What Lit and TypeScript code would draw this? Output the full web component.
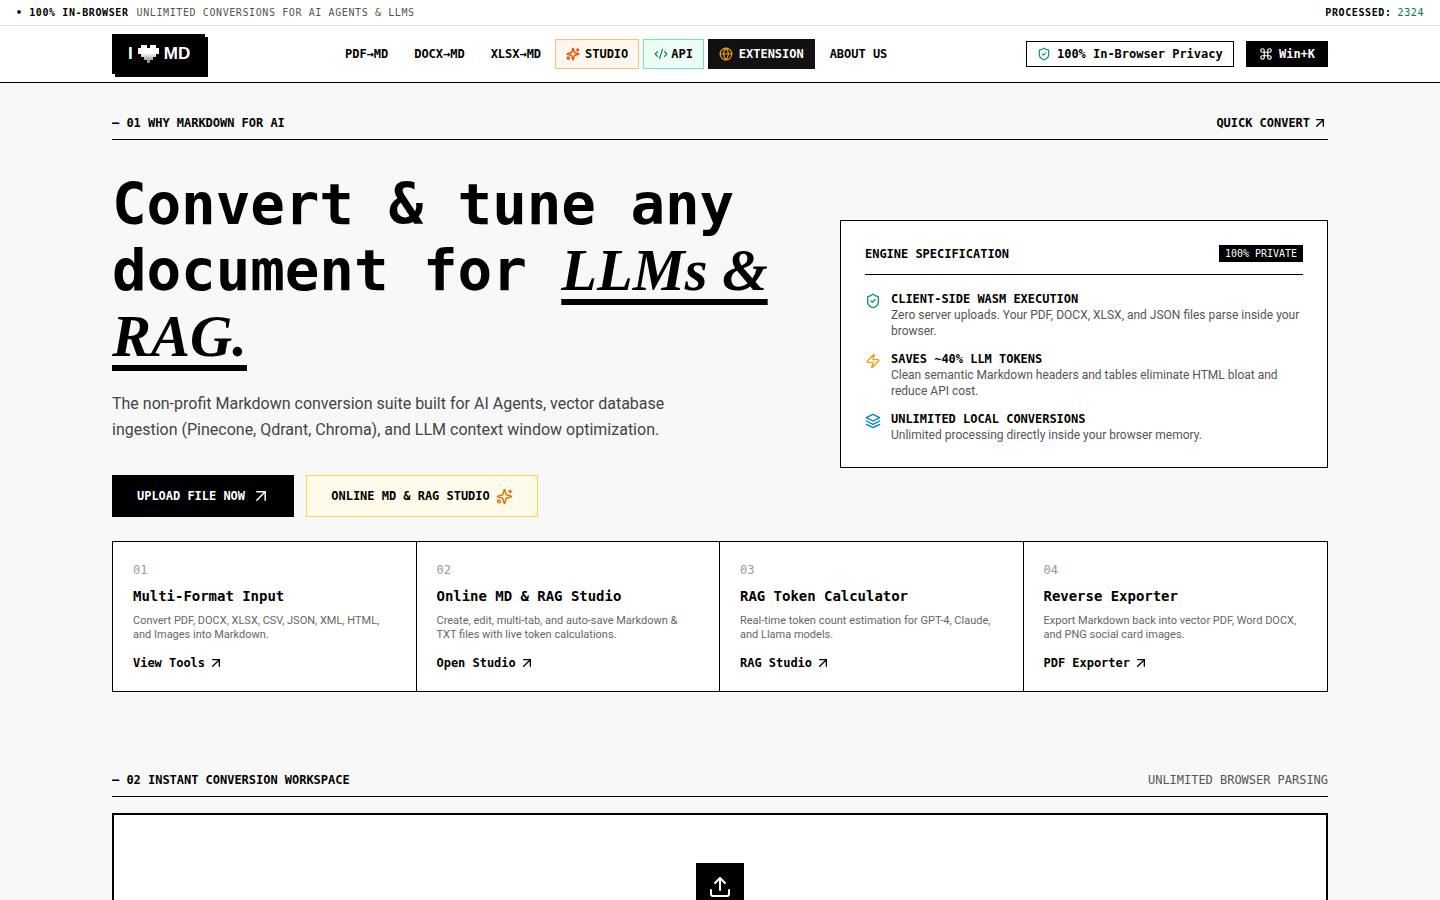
import { LitElement, html, css, svg } from 'lit';
import { customElement } from 'lit/decorators.js';

const icons: Record<string, unknown> = {
  arrow: svg`<path d="M7 7h10v10" /><path d="M7 17 17 7" />`,
  shield: svg`<path d="M20 13c0 5-3.5 7.5-7.66 8.95a1 1 0 0 1-.67-.01C7.5 20.5 4 18 4 13V6a1 1 0 0 1 1-1c2 0 4.5-1.2 6.24-2.72a1.17 1.17 0 0 1 1.52 0C14.51 3.81 17 5 19 5a1 1 0 0 1 1 1z" /><path d="m9 12 2 2 4-4" />`,
  zap: svg`<path d="M4 14a1 1 0 0 1-.78-1.63l9.9-10.2a.5.5 0 0 1 .86.46l-1.92 6.02A1 1 0 0 0 13 10h7a1 1 0 0 1 .78 1.63l-9.9 10.2a.5.5 0 0 1-.86-.46l1.92-6.02A1 1 0 0 0 11 14z" />`,
  layers: svg`<path d="M12 2 2 7l10 5 10-5-10-5z" /><path d="m2 17 10 5 10-5" /><path d="m2 12 10 5 10-5" />`,
  sparkles: svg`<path d="M9.937 15.5A2 2 0 0 0 8.5 14.063l-6.135-1.582a.5.5 0 0 1 0-.962L8.5 9.936A2 2 0 0 0 9.937 8.5l1.582-6.135a.5.5 0 0 1 .963 0L14.063 8.5A2 2 0 0 0 15.5 9.937l6.135 1.581a.5.5 0 0 1 0 .964L15.5 14.063a2 2 0 0 0-1.437 1.437l-1.582 6.135a.5.5 0 0 1-.963 0z" /><path d="M20 3v4" /><path d="M22 5h-4" /><circle cx="4" cy="19" r="2" />`,
  command: svg`<path d="M15 6v12a3 3 0 1 0 3-3H6a3 3 0 1 0 3 3V6a3 3 0 1 0-3 3h12a3 3 0 1 0-3-3" />`,
  globe: svg`<circle cx="12" cy="12" r="10" /><path d="M12 2a14.5 14.5 0 0 0 0 20 14.5 14.5 0 0 0 0-20" /><path d="M2 12h20" />`,
  code: svg`<path d="m18 16 4-4-4-4" /><path d="m6 8-4 4 4 4" /><path d="m14.5 4-5 16" />`,
  upload: svg`<path d="M12 3v12" /><path d="m17 8-5-5-5 5" /><path d="M21 15v4a2 2 0 0 1-2 2H5a2 2 0 0 1-2-2v-4" />`,
};

const icon = (name: string, size: number, color = 'currentColor', width = 2) => html`
  <svg class="ico" width=${size} height=${size} viewBox="0 0 24 24" fill="none" stroke=${color}
    stroke-width=${width} stroke-linecap="round" stroke-linejoin="round">${icons[name]}</svg>
`;

const specs = [
  {
    icon: 'shield',
    color: '#059669',
    title: 'CLIENT-SIDE WASM EXECUTION',
    text: 'Zero server uploads. Your PDF, DOCX, XLSX, and JSON files parse inside your browser.',
  },
  {
    icon: 'zap',
    color: '#f59e0b',
    title: 'SAVES ~40% LLM TOKENS',
    text: 'Clean semantic Markdown headers and tables eliminate HTML bloat and reduce API cost.',
  },
  {
    icon: 'layers',
    color: '#0284c7',
    title: 'UNLIMITED LOCAL CONVERSIONS',
    text: 'Unlimited processing directly inside your browser memory.',
  },
];

const features = [
  {
    num: '01',
    title: 'Multi-Format Input',
    text: 'Convert PDF, DOCX, XLSX, CSV, JSON, XML, HTML, and Images into Markdown.',
    link: 'View Tools',
  },
  {
    num: '02',
    title: 'Online MD & RAG Studio',
    text: 'Create, edit, multi-tab, and auto-save Markdown & TXT files with live token calculations.',
    link: 'Open Studio',
  },
  {
    num: '03',
    title: 'RAG Token Calculator',
    text: 'Real-time token count estimation for GPT-4, Claude, and Llama models.',
    link: 'RAG Studio',
  },
  {
    num: '04',
    title: 'Reverse Exporter',
    text: 'Export Markdown back into vector PDF, Word DOCX, and PNG social card images.',
    link: 'PDF Exporter',
  },
];

// pixel heart for the logo, one string per row
const heartRows = ['0110110', '1111111', '1111111', '0111110', '0011100', '0001000'];

@customElement('app-root')
export class AppRoot extends LitElement {
  static styles = css`
    :host {
      display: block;
      min-height: 900px;
      background: #f8f8f8;
      color: #000;
      font-family: 'DejaVu Sans Mono', monospace;
    }

    a {
      color: inherit;
      text-decoration: none;
    }

    .ico {
      display: block;
      flex: none;
    }

    /* DejaVu Mono runs a hair wider than 0.6em, pull it back */
    .links,
    .privacy,
    .kbd,
    .section-head,
    h1,
    .btn,
    .card-head,
    .spec h3,
    .feature h3,
    .feature a,
    .num {
      letter-spacing: -0.002em;
    }

    .topbar {
      display: flex;
      justify-content: space-between;
      align-items: center;
      height: 25px;
      padding: 0 16px;
      background: #fff;
      border-bottom: 1px solid #e5e5e5;
      font-size: 10px;
      letter-spacing: 0.06em;
      color: #555;
    }

    .topbar b {
      color: #000;
      margin-right: 8px;
    }

    .topbar .stat b {
      margin-right: 6px;
    }

    .topbar .count {
      color: #047857;
    }

    .nav {
      display: flex;
      align-items: center;
      height: 56px;
      padding: 0 112px;
      background: #fff;
      border-bottom: 1px solid #000;
    }

    .logo {
      display: flex;
      align-items: center;
      gap: 5px;
      width: 93px;
      height: 40px;
      padding-left: 16px;
      box-sizing: border-box;
      background: #000;
      box-shadow: 3px 3px 0 #000;
      color: #fff;
      font: 700 17px 'Liberation Sans', sans-serif;
    }

    .heart {
      display: grid;
      grid-template-columns: repeat(7, 3px);
      grid-auto-rows: 3px;
      background: linear-gradient(#fff 45%, #777);
    }

    .heart i {
      background: #000;
    }

    .heart i.on {
      background: transparent;
    }

    .links {
      display: flex;
      align-items: center;
      margin-left: 140px;
      font-size: 12px;
      font-weight: 700;
      flex: 1;
    }

    .links a.plain {
      margin-right: 26px;
    }

    .pill {
      display: flex;
      align-items: center;
      gap: 5px;
      height: 30px;
      box-sizing: border-box;
      padding: 0 10px;
      margin-right: 4px;
      border: 1px solid transparent;
    }

    .pill.studio {
      margin-left: -12px;
      background: #fff7ed;
      border-color: #fdba74;
    }

    .pill.api {
      gap: 3px;
      background: #ecfdf5;
      border-color: #6ee7b7;
    }

    .pill.ext {
      gap: 6px;
      background: #111;
      color: #fff;
      margin-right: 15px;
    }

    .privacy {
      display: flex;
      align-items: center;
      gap: 6px;
      height: 26px;
      width: 208px;
      box-sizing: border-box;
      padding-left: 10px;
      border: 1px solid #000;
      font-size: 12px;
      font-weight: 700;
    }

    .kbd {
      display: flex;
      align-items: center;
      justify-content: center;
      gap: 6px;
      width: 82px;
      height: 26px;
      margin-left: 12px;
      background: #000;
      color: #fff;
      font-size: 12px;
      font-weight: 700;
    }

    main {
      padding: 0 112px;
    }

    .section-head {
      display: flex;
      justify-content: space-between;
      align-items: center;
      height: 32px;
      border-bottom: 1px solid #000;
      font-size: 12px;
      font-weight: 700;
    }

    .section-head .right {
      display: flex;
      align-items: center;
      gap: 2px;
    }

    .section-head .muted {
      font-weight: 400;
      color: #555;
    }

    .hero {
      display: flex;
      align-items: center;
      justify-content: space-between;
      padding-top: 32px;
    }

    .hero-left {
      width: 680px;
    }

    h1 {
      margin: 0;
      font-size: 57.6px;
      line-height: 66px;
      font-weight: 700;
    }

    h1 em {
      font-family: 'Liberation Serif', serif;
      font-size: 58.5px;
      font-style: italic;
      letter-spacing: 0;
      line-height: 0;
      text-decoration: underline 6px;
      text-underline-offset: 9px;
      text-decoration-skip-ink: none;
    }

    .lead {
      margin: 21px 0 0;
      width: 600px;
      font: 16px/26px Roboto, sans-serif;
      color: #444;
    }

    .actions {
      display: flex;
      gap: 12px;
      margin-top: 32px;
    }

    .btn {
      display: flex;
      align-items: center;
      justify-content: center;
      gap: 6px;
      height: 42px;
      box-sizing: border-box;
      font-size: 12px;
      font-weight: 700;
    }

    .btn.dark {
      width: 182px;
      padding-left: 2px;
      background: #000;
      color: #fff;
    }

    .btn.light {
      width: 232px;
      background: #fffbeb;
      border: 1px solid #fcd34d;
    }

    .card {
      width: 488px;
      margin-top: -1px;
      box-sizing: border-box;
      padding: 24px;
      background: #fff;
      border: 1px solid #000;
    }

    .card-head {
      display: flex;
      justify-content: space-between;
      align-items: center;
      padding-bottom: 12px;
      margin-bottom: 16px;
      border-bottom: 1px solid #000;
      font-size: 12px;
      font-weight: 700;
    }

    .badge {
      padding: 2px 6px;
      background: #000;
      color: #fff;
      font-size: 10px;
      line-height: 13px;
      font-weight: 400;
    }

    .spec {
      display: flex;
      gap: 10px;
      margin-top: 12px;
    }

    .spec svg {
      margin-top: 2px;
    }

    .spec h3 {
      margin: 0;
      font-size: 12px;
      line-height: 16px;
      font-weight: 700;
    }

    .spec p {
      margin: 0;
      font: 12px/16px Roboto, sans-serif;
      color: #555;
    }

    .features {
      display: grid;
      grid-template-columns: repeat(4, 1fr);
      margin-top: 24px;
      background: #fff;
      border: 1px solid #000;
    }

    .feature {
      padding: 20px 20px 20px;
      height: 149px;
      box-sizing: border-box;
      border-right: 1px solid #000;
    }

    .feature:last-child {
      border-right: 0;
    }

    .feature .num {
      font-size: 12px;
      line-height: 16px;
      color: #999;
    }

    .feature h3 {
      margin: 8px 0 0;
      font-size: 14px;
      line-height: 20px;
      font-weight: 700;
    }

    .feature p {
      margin: 8px 0 0;
      font: 11px/14px Roboto, sans-serif;
      color: #666;
    }

    .feature a {
      display: flex;
      align-items: center;
      gap: 3px;
      margin-top: 13px;
      font-size: 12px;
      line-height: 16px;
      font-weight: 700;
    }

    .workspace-head {
      margin-top: 72px;
    }

    .dropzone {
      display: flex;
      justify-content: center;
      margin-top: 16px;
      padding: 48px 0;
      background: #fff;
      border: 2px solid #000;
    }

    .upload {
      display: flex;
      align-items: center;
      justify-content: center;
      width: 48px;
      height: 48px;
      background: #000;
    }
  `;

  render() {
    return html`
      <div class="topbar">
        <span><b>• 100% IN-BROWSER</b>UNLIMITED CONVERSIONS FOR AI AGENTS &amp; LLMS</span>
        <span class="stat"><b>PROCESSED:</b><span class="count">2324</span></span>
      </div>

      <header class="nav">
        <a class="logo" href="#">
          I
          <span class="heart">
            ${heartRows.flatMap(row => [...row].map(c => html`<i class=${c === '1' ? 'on' : ''}></i>`))}
          </span>
          MD
        </a>
        <nav class="links">
          <a class="plain" href="#">PDF→MD</a>
          <a class="plain" href="#">DOCX→MD</a>
          <a class="plain" href="#">XLSX→MD</a>
          <a class="pill studio" href="#">${icon('sparkles', 14, '#ea580c', 2.6)}STUDIO</a>
          <a class="pill api" href="#">${icon('code', 14, '#047857')}API</a>
          <a class="pill ext" href="#">${icon('globe', 14, '#f59e0b')}EXTENSION</a>
          <a href="#">ABOUT US</a>
        </nav>
        <div class="privacy">${icon('shield', 14, '#059669')}100% In-Browser Privacy</div>
        <div class="kbd">${icon('command', 14)}Win+K</div>
      </header>

      <main>
        <div class="section-head" style="margin-top: 24px">
          <span>— 01 WHY MARKDOWN FOR AI</span>
          <a class="right" href="#">QUICK CONVERT ${icon('arrow', 16, 'currentColor', 2)}</a>
        </div>

        <section class="hero">
          <div class="hero-left">
            <h1>Convert &amp; tune any document for <em>LLMs &amp;</em> <em>RAG.</em></h1>
            <p class="lead">
              The non-profit Markdown conversion suite built for AI Agents, vector database ingestion
              (Pinecone, Qdrant, Chroma), and LLM context window optimization.
            </p>
            <div class="actions">
              <a class="btn dark" href="#">UPLOAD FILE NOW ${icon('arrow', 20, 'currentColor', 1.8)}</a>
              <a class="btn light" href="#">ONLINE MD &amp; RAG STUDIO ${icon('sparkles', 17, '#d97706')}</a>
            </div>
          </div>

          <aside class="card">
            <div class="card-head">
              <span>ENGINE SPECIFICATION</span>
              <span class="badge">100% PRIVATE</span>
            </div>
            ${specs.map(
              s => html`
                <div class="spec">
                  ${icon(s.icon, 16, s.color)}
                  <div>
                    <h3>${s.title}</h3>
                    <p>${s.text}</p>
                  </div>
                </div>
              `,
            )}
          </aside>
        </section>

        <section class="features">
          ${features.map(
            f => html`
              <div class="feature">
                <div class="num">${f.num}</div>
                <h3>${f.title}</h3>
                <p>${f.text}</p>
                <a href="#">${f.link} ${icon('arrow', 16, 'currentColor', 2)}</a>
              </div>
            `,
          )}
        </section>

        <div class="section-head workspace-head">
          <span>— 02 INSTANT CONVERSION WORKSPACE</span>
          <span class="muted">UNLIMITED BROWSER PARSING</span>
        </div>

        <section class="dropzone">
          <div class="upload">${icon('upload', 24, '#fff')}</div>
        </section>
      </main>
    `;
  }
}
